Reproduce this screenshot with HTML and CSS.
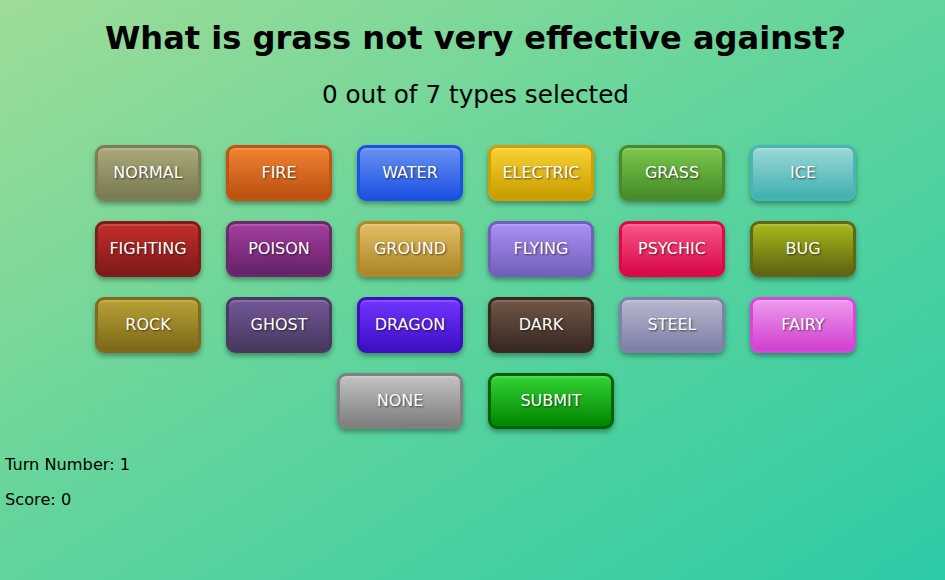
FILE: index.html
```html
<!DOCTYPE html>
<html lang="en">
<head>
<meta charset="utf-8">
<title>Type Quiz</title>
<link rel="stylesheet" href="styles.css">
</head>
<body>
<main class="quiz">
  <h1 class="question">What is grass not very effective against?</h1>
  <h2 class="counter">0 out of 7 types selected</h2>
  <div class="types">
    <button class="type normal">NORMAL</button>
    <button class="type fire">FIRE</button>
    <button class="type water">WATER</button>
    <button class="type electric">ELECTRIC</button>
    <button class="type grass">GRASS</button>
    <button class="type ice">ICE</button>
    <button class="type fighting">FIGHTING</button>
    <button class="type poison">POISON</button>
    <button class="type ground">GROUND</button>
    <button class="type flying">FLYING</button>
    <button class="type psychic">PSYCHIC</button>
    <button class="type bug">BUG</button>
    <button class="type rock">ROCK</button>
    <button class="type ghost">GHOST</button>
    <button class="type dragon">DRAGON</button>
    <button class="type dark">DARK</button>
    <button class="type steel">STEEL</button>
    <button class="type fairy">FAIRY</button>
  </div>
  <div class="actions">
    <button class="type wide none">NONE</button>
    <button class="type wide submit">SUBMIT</button>
  </div>
</main>
<section class="stats">
  <p>Turn Number: 1</p>
  <p>Score: 0</p>
</section>
</body>
</html>
```
FILE: styles.css
```css
html, body {
  margin: 0;
  height: 100%;
}
body {
  font-family: "DejaVu Sans", Verdana, sans-serif;
  color: #000;
  background: linear-gradient(to bottom right, #9edc96 0%, #5fd49c 50%, #2ccaa6 100%);
  padding: 0 5px;
  box-sizing: border-box;
}
.quiz {
  display: flex;
  flex-direction: column;
  align-items: center;
  padding-left: 6px;
  padding-top: 20px;
}
.question {
  font-size: 32.1px;
  font-weight: bold;
  margin: 0;
  line-height: 37px;
}
.counter {
  font-size: 24.7px;
  font-weight: normal;
  margin: 24px 0 0;
  line-height: 28px;
}
.types {
  display: grid;
  grid-template-columns: repeat(6, 106px);
  column-gap: 25px;
  row-gap: 20px;
  margin-top: 36px;
}
.actions {
  display: flex;
  gap: 25px;
  margin-top: 20px;
  margin-bottom: 10px;
}
.type {
  width: 106px;
  height: 56px;
  border: 3px solid var(--b);
  border-radius: 9px;
  background: linear-gradient(to bottom, var(--t), var(--d));
  box-shadow: 0 3px 5px rgba(0, 0, 0, 0.35), inset 0 2px 0 rgba(255, 255, 255, 0.15);
  color: #fff;
  font-family: "DejaVu Sans", Verdana, sans-serif;
  font-size: 16px;
  text-shadow: 1px 1px 2px rgba(0, 0, 0, 0.6);
  padding: 0 0 2px;
  cursor: pointer;
  box-sizing: border-box;
}
.wide { width: 126px; }

.normal   { --t: #aaa97a; --d: #797950; --b: #7d7c58; }
.fire     { --t: #f08232; --d: #bc5010; --b: #c05412; }
.water    { --t: #6890f0; --d: #1c52e2; --b: #1a52e8; }
.electric { --t: #f8d232; --d: #c89c00; --b: #cfa000; }
.grass    { --t: #7ac74c; --d: #468a28; --b: #4a8a2c; }
.ice      { --t: #9ad8d6; --d: #40b0b0; --b: #48b6b6; }
.fighting { --t: #c22e28; --d: #7e1a1a; --b: #7e1c1a; }
.poison   { --t: #a33ea1; --d: #652266; --b: #682a68; }
.ground   { --t: #e2bf65; --d: #ac8626; --b: #b08828; }
.flying   { --t: #a98ff3; --d: #7460bc; --b: #7060bc; }
.psychic  { --t: #f95587; --d: #d80848; --b: #de0848; }
.bug      { --t: #a6b91a; --d: #5e6410; --b: #606818; }
.rock     { --t: #b6a136; --d: #7e6818; --b: #806a1e; }
.ghost    { --t: #735797; --d: #46385e; --b: #483a60; }
.dragon   { --t: #6f35fc; --d: #3e0ec6; --b: #400ec0; }
.dark     { --t: #705746; --d: #372820; --b: #382a22; }
.steel    { --t: #b7b7ce; --d: #7e7ea6; --b: #8080a8; }
.fairy    { --t: #ee99ee; --d: #d040d0; --b: #d848d8; }
.none     { --t: #c2c2c2; --d: #7e7e7e; --b: #808080; }
.submit   { --t: #34d234; --d: #008600; --b: #006400; }

.stats p {
  font-size: 16.2px;
  margin: 16px 0;
}
```
